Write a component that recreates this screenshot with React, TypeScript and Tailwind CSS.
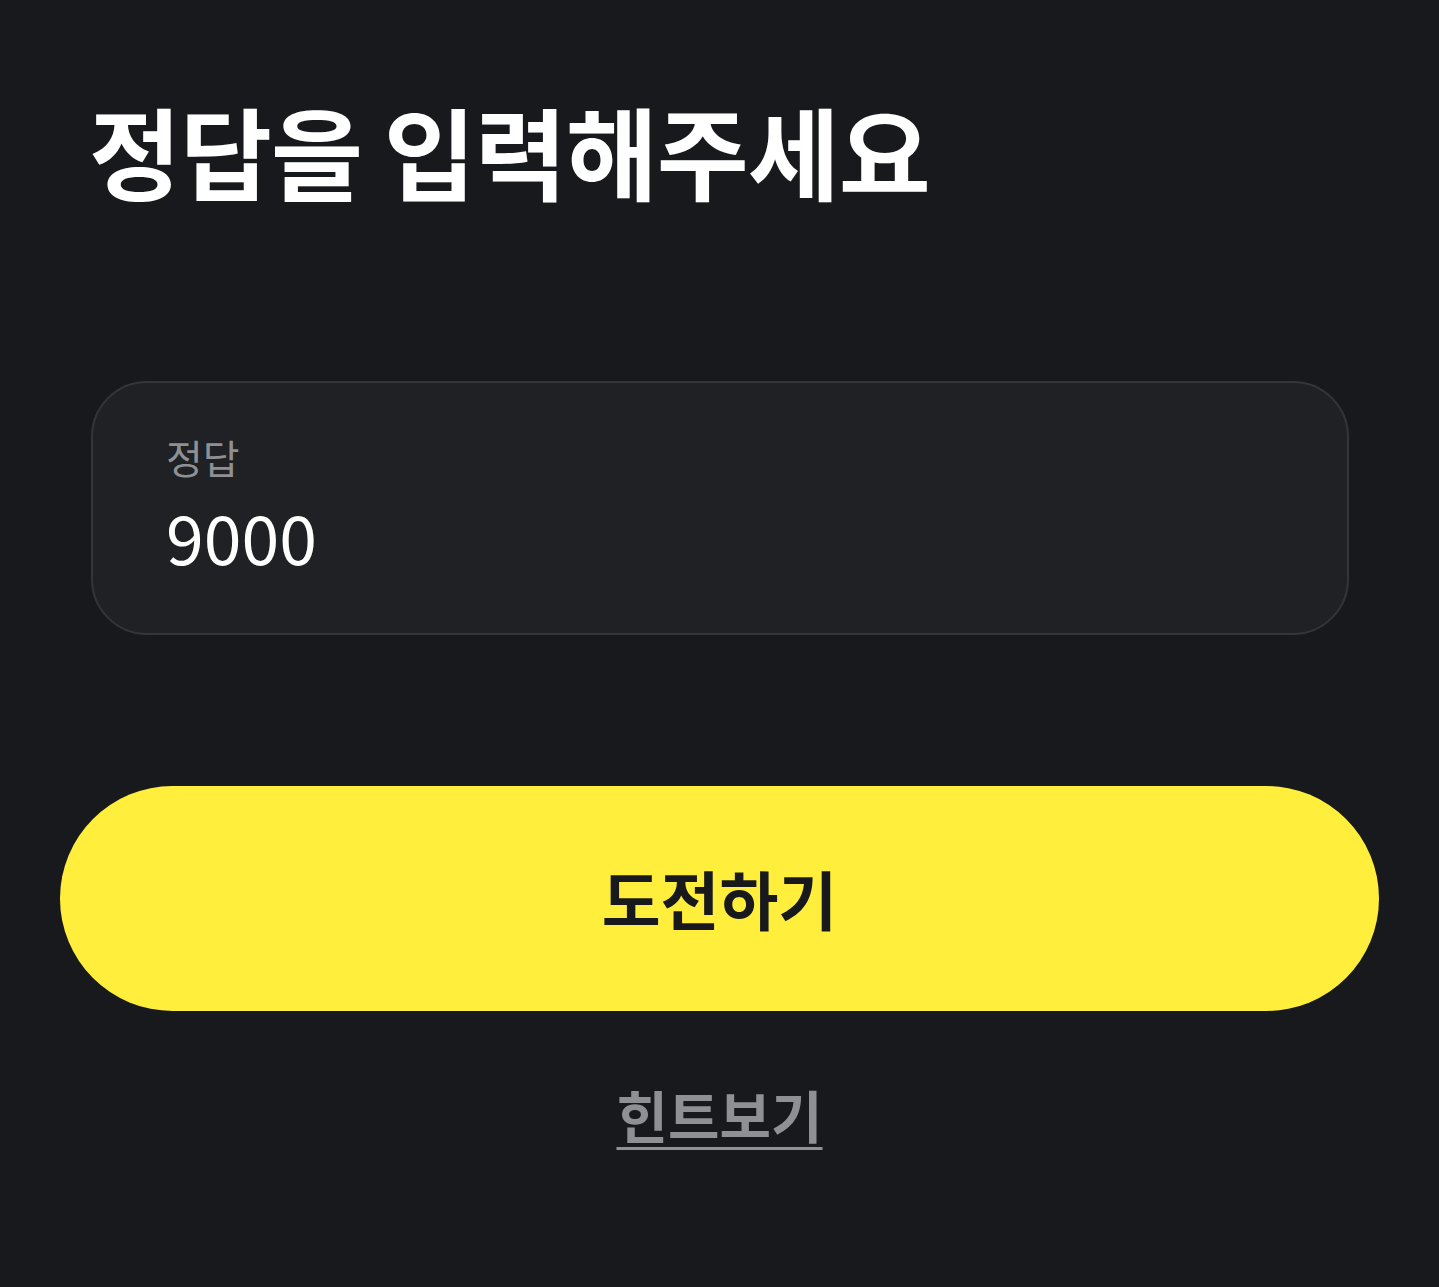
export default function App() {
  return (
    <div className="min-h-[1287px] w-full bg-[#17191c] font-['Noto_Sans_CJK_KR','Noto_Sans',sans-serif]">
      <div className="px-[60px] pt-[80px]">
        {/* 제목 */}
        <h1 className="pl-[29px] text-[100px] font-bold leading-[140px] tracking-[-1px] text-white">정답을 입력해주세요</h1>

        {/* 입력 카드 */}
        <div className="ml-[31px] mr-[30px] mt-[161px] h-[254px] rounded-[56px] border-2 border-[#333539] bg-[#1f2124] pl-[73px] pt-[46px]">
          <p className="text-[40px] leading-[56px] text-[#8f9093]">정답</p>
          <p className="mt-[6px] text-[68px] leading-[90px] text-white">9000</p>
        </div>

        {/* 버튼 */}
        <button className="mt-[151px] flex h-[225px] w-full items-center justify-center rounded-full bg-[#ffef3c] pb-[4px] text-[64px] font-bold text-[#17191c]">
          도전하기
        </button>

        <div className="mt-[63px] flex justify-center">
          <span className="text-[56px] font-bold leading-[80px] text-[#8e9094] underline decoration-[3px] underline-offset-[9px]">
            힌트보기
          </span>
        </div>
      </div>
    </div>
  )
}
